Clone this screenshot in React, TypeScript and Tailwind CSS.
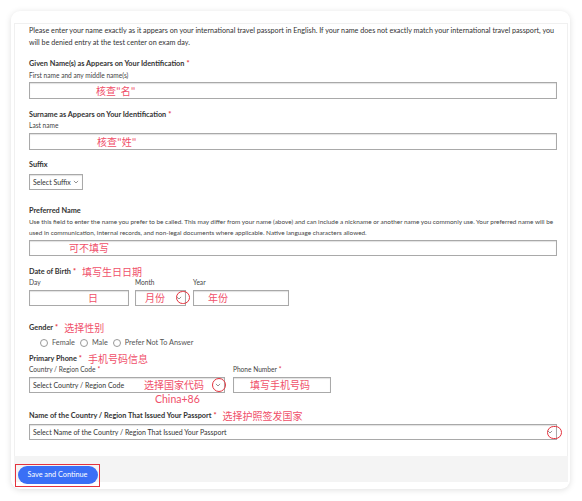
import React from 'react'

const ann = 'text-[#f0506a] text-[10px] leading-none font-["Noto_Sans_CJK_SC",sans-serif]'
const box = 'h-[16px] border border-[#a9a9a9] bg-white shadow-[inset_0_1px_1px_rgba(0,0,0,0.12)] relative flex items-center'

function Chevron(){
  return (
    <svg width="6" height="4" viewBox="0 0 6 4" className="shrink-0">
      <path d="M0.9 0.9 L3 3 L5.1 0.9" fill="none" stroke="#777" strokeWidth="0.8" />
    </svg>
  )
}

function Ring({ className }: any){
  return <span className={`absolute rounded-full border-solid border-[length:1.5px] border-[color:#e5323d] ${className}`} />
}

function Label({ children, req, note }: any){
  return (
    <div className="flex items-center h-[10px] text-[7.3px] font-bold text-[#333]">
      <span>{children}</span>
      {req && <span className="text-[#e5323d] ml-[2px]">*</span>}
      {note && <span className={`${ann} ml-[6px] font-normal`}>{note}</span>}
    </div>
  )
}

function Sub({ children, req }: any){
  return <div className="h-[10px] leading-[10px] text-[6.6px] text-[#444]">{children}{req && <span className="text-[#e5323d] ml-[2px]">*</span>}</div>
}

function Radio({ label }: any){
  return (
    <div className="flex items-center mr-[5px]">
      <span className="w-[8px] h-[8px] rounded-full border border-[#999] bg-white mr-[4px]" />
      <span className="text-[7.3px] text-[#555]">{label}</span>
    </div>
  )
}

export default function App(){
  return (
    <div className="w-[582px] h-[501px] bg-white pt-[11px] pl-[11px] font-['Lato',sans-serif]">
      <div className="w-[559px] h-[478px] rounded-[9px] bg-white shadow-[0_1px_6px_rgba(0,0,0,0.13)] pt-[12px] pl-[3px] pr-[2px]">
        <div className="border-t border-x border-[#f0f0f0] pl-[14px] pr-[10px] pt-[1px] pb-[16px]">
          <p className="text-[7.2px] leading-[12px] text-[#333]">
            Please enter your name exactly as it appears on your international travel passport in English. If your name does not exactly match your international travel passport, you<br />
            will be denied entry at the test center on exam day.
          </p>

          <div className="mt-[10px]"><Label req>Given Name(s) as Appears on Your Identification</Label></div>
          <div className="mt-[1px]"><Sub>First name and any middle name(s)</Sub></div>
          <div className={`${box} mt-[2px] h-[17px]`}>
            <span className={`${ann} ml-[66px]`}>核查"名"</span>
          </div>

          <div className="mt-[11px]"><Label req>Surname as Appears on Your Identification</Label></div>
          <Sub>Last name</Sub>
          <div className={`${box} mt-[3px] h-[17px]`}>
            <span className={`${ann} ml-[67px]`}>核查"姓"</span>
          </div>

          <div className="mt-[10px]"><Label>Suffix</Label></div>
          <div className={`${box} mt-[4px] w-[54px] justify-between px-[3px]`}>
            <span className="text-[7px] text-[#333]">Select Suffix</span>
            <Chevron />
          </div>

          <div className="mt-[16px]"><Label>Preferred Name</Label></div>
          <p className="text-[6.4px] leading-[11px] text-[#444]">
            Use this field to enter the name you prefer to be called. This may differ from your name (above) and can include a nickname or another name you commonly use. Your preferred name will be<br />
            used in communication, internal records, and non-legal documents where applicable. Native language characters allowed.
          </p>
          <div className={`${box} mt-[2px]`}>
            <span className={`${ann} ml-[39px]`}>可不填写</span>
          </div>

          <div className="mt-[11px]"><Label req note="填写生日日期">Date of Birth</Label></div>
          <div className="flex">
            <div className="w-[100px] mr-[6px]">
              <Sub>Day</Sub>
              <div className={`${box} mt-[3px]`}><span className={`${ann} ml-[58px]`}>日</span></div>
            </div>
            <div className="w-[51px] mr-[7px]">
              <Sub>Month</Sub>
              <div className={`${box} mt-[3px] justify-between pr-[3px]`}>
                <span className={`${ann} ml-[9px]`}>月份</span>
                <Chevron />
                <Ring className="w-[14px] h-[13px] right-[-5px] top-[0px]" />
              </div>
            </div>
            <div className="w-[96px]">
              <Sub>Year</Sub>
              <div className={`${box} mt-[3px]`}><span className={`${ann} ml-[14px]`}>年份</span></div>
            </div>
          </div>

          <div className="mt-[17px]"><Label req note="选择性别">Gender</Label></div>
          <div className="flex mt-[5px] h-[10px] ml-[11px]">
            <Radio label="Female" />
            <Radio label="Male" />
            <Radio label="Prefer Not To Answer" />
          </div>

          <div className="mt-[6px]"><Label req note="手机号码信息">Primary Phone</Label></div>
          <div className="flex">
            <div className="w-[196px] mr-[8px]">
              <Sub req>Country / Region Code</Sub>
              <div className={`${box} mt-[3px] pl-[3px] pr-[3px]`}>
                <span className="text-[7px] text-[#333]">Select Country / Region Code</span>
                <span className={`${ann} ml-[20px]`}>选择国家代码</span>
                <span className="flex-1" />
                <Chevron />
                <Ring className="w-[14px] h-[14px] right-[-2px] top-[0px]" />
              </div>
            </div>
            <div className="w-[98px]">
              <Sub req>Phone Number</Sub>
              <div className={`${box} mt-[3px]`}><span className={`${ann} ml-[16px]`}>填写手机号码</span></div>
            </div>
          </div>
          <div className="h-[14px] flex items-center ml-[126px] text-[#f0506a] text-[10.5px]">China+86</div>

          <div className="mt-[4px]"><Label req note="选择护照签发国家">Name of the Country / Region That Issued Your Passport</Label></div>
          <div className={`${box} mt-[3px] pl-[3px] pr-[3px] justify-between`}>
            <span className="text-[7px] text-[#333]">Select Name of the Country / Region That Issued Your Passport</span>
            <Chevron />
            <Ring className="w-[15px] h-[13px] right-[-6px] top-[1px]" />
          </div>
        </div>

        <div className="h-[26px] bg-[#f4f4f4] pl-[1px] pt-[3px]">
          <div className="inline-block border-solid border-[length:1.5px] border-[color:#e5323d] p-[1.5px]">
            <button className="w-[80px] h-[18px] rounded-full bg-[#3a6ff6] text-white text-[7.3px] flex items-center justify-center">Save and Continue</button>
          </div>
        </div>
      </div>
    </div>
  )
}
